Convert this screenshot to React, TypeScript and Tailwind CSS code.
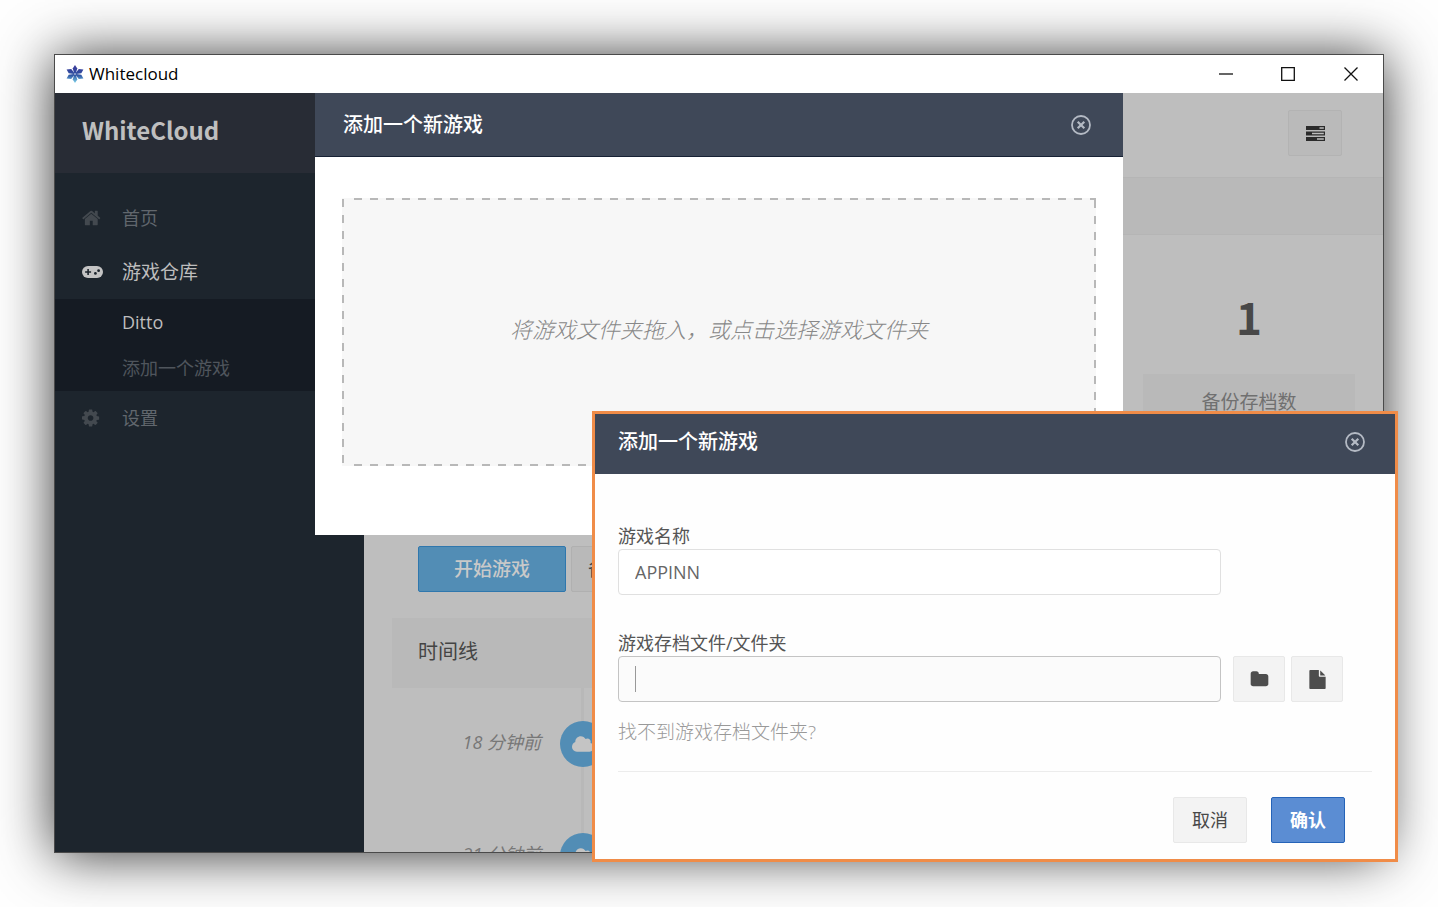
import type { ReactNode } from 'react'
import { FaCloud } from 'react-icons/fa'

function Snowflake() {
  return (
    <svg className="h-[18px] w-[18px] shrink-0" viewBox="0 0 18 18" aria-hidden="true">
      <defs>
        <linearGradient id="flake" x1="0" y1="0" x2="0" y2="18" gradientUnits="userSpaceOnUse">
          <stop offset="0.15" stopColor="#3a3f9c" />
          <stop offset="0.55" stopColor="#2b4fa0" />
          <stop offset="1" stopColor="#7fd6ec" />
        </linearGradient>
      </defs>
      <g fill="url(#flake)">
        <path d="M9 0 L11.3 3.6 L9.7 8.4 L8.3 8.4 L6.7 3.6Z" />
        <path d="M9 18 L11.3 14.4 L9.7 9.6 L8.3 9.6 L6.7 14.4Z" />
        <path d="M0.6 4.4 L5.2 3.9 L8.6 8.2 L7.8 9 L2.7 8.3Z" />
        <path d="M17.4 4.4 L12.8 3.9 L9.4 8.2 L10.2 9 L15.3 8.3Z" />
        <path d="M0.6 13.6 L5.2 14.1 L8.6 9.8 L7.8 9 L2.7 9.7Z" />
        <path d="M17.4 13.6 L12.8 14.1 L9.4 9.8 L10.2 9 L15.3 9.7Z" />
      </g>
    </svg>
  )
}

function HomeIcon() {
  return (
    <svg className="h-5 w-5" viewBox="64 0 1792 1792" fill="currentColor" aria-hidden="true">
      <path d="M1472 992v480q0 26-19 45t-45 19h-384v-384h-256v384h-384q-26 0-45-19t-19-45v-480q0-1 .5-3t.5-3l575-474 575 474q1 2 1 6zm223-69l-62 74q-8 9-21 11h-3q-13 0-21-7l-692-577-692 577q-12 8-24 7-13-2-21-11l-62-74q-8-10-7-23.5t11-21.5l719-599q32-26 76-26t76 26l244 204v-195q0-14 9-23t23-9h192q14 0 23 9t9 23v408l219 182q10 8 11 21.5t-7 23.5z" />
    </svg>
  )
}

function GamepadIcon() {
  return (
    <svg className="h-3 w-[21px]" viewBox="0 0 21 12" aria-hidden="true">
      <rect width="21" height="12" rx="6" fill="currentColor" />
      <path d="M5.3 3h1.6v2.2h2.2v1.6H6.9V9H5.3V6.8H3.1V5.2h2.2z" fill="#1d252d" />
      <circle cx="13.4" cy="7.4" r="1.4" fill="#1d252d" />
      <circle cx="16.6" cy="4.7" r="1.4" fill="#1d252d" />
    </svg>
  )
}

function CogIcon() {
  return (
    <svg className="h-5 w-5" viewBox="128 0 1792 1792" fill="currentColor" aria-hidden="true">
      <path d="M1152 896q0-106-75-181t-181-75-181 75-75 181 75 181 181 75 181-75 75-181zm512-109v222q0 12-8 23t-20 13l-185 28q-19 54-39 91 35 50 107 138 10 12 10 25t-9 23q-27 37-99 108t-94 71q-12 0-26-9l-138-108q-44 23-91 38-16 136-29 186-7 28-36 28h-222q-14 0-24.5-8.5t-11.5-21.5l-28-184q-49-16-90-37l-141 107q-10 9-25 9-14 0-25-11-126-114-165-168-7-10-7-23 0-12 8-23 15-21 51-66.5t54-70.5q-27-50-41-99l-183-27q-13-2-21-12.5t-8-23.5v-222q0-12 8-23t19-13l186-28q14-46 39-92-40-57-107-138-10-12-10-24 0-10 9-23 26-36 98.5-107.5t94.5-71.5q13 0 26 10l138 107q44-23 91-38 16-136 29-186 7-28 36-28h222q14 0 24.5 8.5t11.5 21.5l28 184q49 16 90 37l142-107q9-9 24-9 13 0 25 10 129 119 165 170 7 8 7 22 0 12-8 23-15 21-51 66.5t-54 70.5q26 50 41 98l183 28q13 2 21 12.5t8 23.5z" />
    </svg>
  )
}

function FolderIcon() {
  return (
    <svg className="h-[19px] w-[19px]" viewBox="0 0 1792 1792" fill="currentColor" aria-hidden="true">
      <path d="M1728 608v704q0 92-66 158t-158 66h-1216q-92 0-158-66t-66-158v-960q0-92 66-158t158-66h320q92 0 158 66t66 158v32h672q92 0 158 66t66 158z" />
    </svg>
  )
}

function FileIcon() {
  return (
    <svg className="h-[19px] w-[19px]" viewBox="0 0 1792 1792" fill="currentColor" aria-hidden="true">
      <path d="M1152 512v-472q22 14 36 28l408 408q14 14 28 36h-472zm-128 32q0 40 28 68t68 28h544v1056q0 40-28 68t-68 28h-1344q-40 0-68-28t-28-68v-1600q0-40 28-68t68-28h800v544z" />
    </svg>
  )
}

function TasksIcon() {
  return (
    <svg className="h-[15px] w-[19px]" viewBox="0 0 19 15" aria-hidden="true">
      <path fill="#2b2b2b" d="M0 0h19v4H0zM0 5.5h19v4H0zM0 11h19v4H0z" />
      <path fill="#bdbdbd" d="M13.5 1.2h4.3v1.6h-4.3zM6 6.7h11.8v1.6H6zM11 12.2h6.8v1.6H11z" />
    </svg>
  )
}

function CloseCircle() {
  return (
    <svg className="h-5 w-5" viewBox="0 0 20 20" fill="none" stroke="currentColor" aria-hidden="true">
      <circle cx="10" cy="10" r="9" strokeWidth="1.8" />
      <path strokeWidth="2.2" d="M6.7 6.7l6.6 6.6M13.3 6.7l-6.6 6.6" />
    </svg>
  )
}

function DashedFrame() {
  return (
    <svg className="absolute inset-0 h-full w-full" stroke="#b8b8b8" strokeWidth="2" strokeDasharray="8 8" aria-hidden="true">
      <line x1="12" y1="1" x2="100%" y2="1" />
      <line x1="12" y1="100%" x2="100%" y2="100%" strokeWidth="4" />
      <line x1="1" y1="1" x2="1" y2="100%" />
      <line x1="100%" y1="2" x2="100%" y2="100%" strokeWidth="4" />
    </svg>
  )
}

function TitleBar() {
  return (
    <header className="flex h-[38px] shrink-0 items-center justify-between bg-white pb-px pl-[11px] text-black">
      <div className="flex items-center gap-[5px]">
        <Snowflake />
        <span className="text-[17px] leading-6">Whitecloud</span>
      </div>
      <div className="flex h-full">
        <button className="flex w-[62px] items-center justify-center" aria-label="最小化">
          <svg className="h-[14px] w-[14px]" viewBox="0 0 14 14" stroke="#111" strokeWidth="1.3" aria-hidden="true">
            <path d="M0 7h14" />
          </svg>
        </button>
        <button className="flex w-[62px] items-center justify-center" aria-label="最大化">
          <svg className="h-[14px] w-[14px]" viewBox="0 0 14 14" fill="none" stroke="#111" strokeWidth="1.3" aria-hidden="true">
            <path d="M.7.7h12.6v12.6H.7z" />
          </svg>
        </button>
        <button className="flex w-16 items-center justify-center" aria-label="关闭">
          <svg className="h-[14px] w-[14px]" viewBox="0 0 14 14" stroke="#111" strokeWidth="1.3" aria-hidden="true">
            <path d="M.5.5l13 13M13.5.5l-13 13" />
          </svg>
        </button>
      </div>
    </header>
  )
}

function Sidebar() {
  return (
    <aside className="w-[309px] shrink-0 bg-[#1d252d] text-[18px] leading-6 text-[#61676d]">
      <div className="flex h-20 items-center bg-[#282c35] pb-[6px] pl-[27px] font-['Noto_Sans_CJK_SC',sans-serif] text-[24px] font-bold text-[#bfbfbf]">
        WhiteCloud
      </div>
      <nav className="pt-[18px]">
        <a href="#home" className="flex h-[54px] items-center pl-[27px]">
          <span className="w-10 text-[#43494f]">
            <HomeIcon />
          </span>
          首页
        </a>
        <a href="#games" className="flex h-[54px] items-center pl-[27px] text-[19px] text-[#bdbdbd]">
          <span className="w-10 text-[#c4c4c4]">
            <GamepadIcon />
          </span>
          游戏仓库
        </a>
        <div className="bg-[#151b23] pl-[67px]">
          <a href="#ditto" className="flex h-[46px] items-center text-[#bdbdbd]">
            Ditto
          </a>
          <a href="#add" className="flex h-[46px] items-center text-[#4f555c]">
            添加一个游戏
          </a>
        </div>
        <a href="#settings" className="flex h-[54px] items-center pl-[27px]">
          <span className="w-10 text-[#43494f]">
            <CogIcon />
          </span>
          设置
        </a>
      </nav>
    </aside>
  )
}

function TimelineItem({ time }: { time: string }) {
  return (
    <li className="flex h-28 items-center gap-[19px]">
      <span className="w-[149px] pb-1 text-right text-[18px] leading-6 text-[#777] italic">{time}</span>
      <span className="z-10 flex h-[46px] w-[46px] items-center justify-center rounded-full bg-[#528db5] text-[#c4c4c4]">
        <FaCloud className="h-[22px] w-[22px]" />
      </span>
    </li>
  )
}

function GamePage() {
  return (
    <main className="flex min-w-0 flex-1 flex-col bg-[#bebebe]">
      <div className="flex h-[84px] shrink-0 items-center justify-end pr-[41px] pb-1">
        <button
          className="flex h-[46px] w-[54px] items-center justify-center rounded-xs border border-[#b3b3b3] bg-[#bababa]"
          aria-label="任务"
        >
          <TasksIcon />
        </button>
      </div>
      <div className="h-[58px] shrink-0 border-y border-[#b5b5b5] bg-[#b9b9b9]" />

      <div className="flex h-[383px] shrink-0 items-end justify-between px-7 pb-[26px]">
        <div className="flex gap-[5px] pl-[26px]">
          <button className="h-[46px] w-[148px] rounded-xs border border-[#2f77ad] bg-[#528db5] text-[19px] font-medium text-[#c9c9c9]">
            开始游戏
          </button>
          <button className="h-[46px] w-[110px] rounded-xs border border-[#b0b0b0] bg-[#b9b9b9] pl-4 text-left text-[19px] text-[#444]">
            备份
          </button>
        </div>
        <div className="flex w-[212px] flex-col self-start pt-11 text-center">
          <strong className="font-['Noto_Sans_CJK_SC',sans-serif] text-[44px] leading-[74px] font-bold text-[#484848]">1</strong>
          <span className="mt-[21px] bg-[#b9b9b9] py-4 text-[19px] leading-6 text-[#707070]">备份存档数</span>
        </div>
      </div>

      <section className="ml-7 min-h-0 flex-1">
        <h2 className="flex h-[70px] items-center bg-[#b9b9b9] pb-[3px] pl-[26px] text-[20px] text-[#444]">时间线</h2>
        <div className="relative">
          <div className="absolute top-0 left-[189px] h-full w-[3px] bg-[#b8b8b8]" />
          <ul>
            <TimelineItem time="18 分钟前" />
            <TimelineItem time="21 分钟前" />
          </ul>
        </div>
      </section>
    </main>
  )
}

function DropDialog() {
  return (
    <section role="dialog" aria-labelledby="drop-title" className="w-[808px] bg-white">
      <header className="flex h-16 items-center justify-between border-b border-[#172235] bg-[#3f4858] pr-8 pl-7 text-white">
        <h2 id="drop-title" className="text-[20px] leading-6 font-medium">
          添加一个新游戏
        </h2>
        <button className="text-[#b4bac4]" aria-label="关闭">
          <CloseCircle />
        </button>
      </header>
      <div className="px-[27px] pt-[41px] pb-[69px]">
        <button className="relative flex h-[268px] w-full items-center justify-center bg-[#f7f7f7] pb-[5px] text-[22px] font-light text-[#888] italic">
          <DashedFrame />
          将游戏文件夹拖入，或点击选择游戏文件夹
        </button>
      </div>
    </section>
  )
}

function IconButton({ label, children }: { label: string; children: ReactNode }) {
  return (
    <button
      type="button"
      className="flex h-[46px] w-[52px] items-center justify-center rounded-xs border border-[#e8e8e8] bg-[#f3f3f3] text-[#4d4d4d]"
      aria-label={label}
    >
      {children}
    </button>
  )
}

function GameFormDialog() {
  return (
    <section
      role="dialog"
      aria-labelledby="form-title"
      className="absolute right-10 bottom-[45px] w-[806px] border-[3px] border-[#f08c48] bg-[#fefefe] text-[#555]"
    >
      <header className="flex h-[60px] items-center justify-between bg-[#3f4858] pr-[30px] pb-1 pl-[23px] text-white">
        <h2 id="form-title" className="text-[20px] leading-6 font-medium">
          添加一个新游戏
        </h2>
        <button className="text-[#b4bac4]" aria-label="关闭">
          <CloseCircle />
        </button>
      </header>
      <form className="px-[23px] pt-[50px] pb-4">
        <label htmlFor="game-name" className="block text-[18px] leading-[25px]">
          游戏名称
        </label>
        <input
          id="game-name"
          defaultValue="APPINN"
          className="block h-[46px] w-[603px] rounded-sm border border-[#e0e0e0] bg-white px-4 text-[18px] text-[#666]"
        />

        <label htmlFor="save-path" className="mt-9 block text-[18px] leading-[25px]">
          游戏存档文件/文件夹
        </label>
        <div className="flex items-center gap-[6px]">
          <div className="relative mr-[6px]">
            <input
              id="save-path"
              className="block h-[46px] w-[603px] rounded-sm border border-[#c4c4c4] bg-[#fbfbfb] px-4 text-[18px] text-[#666]"
            />
            <span className="absolute top-[10px] left-[17px] h-[26px] w-px bg-[#999]" />
          </div>
          <IconButton label="选择文件夹">
            <FolderIcon />
          </IconButton>
          <IconButton label="选择文件">
            <FileIcon />
          </IconButton>
        </div>
        <a href="#help" className="mt-[18px] block text-[19px] leading-6 font-light text-[#999]">
          找不到游戏存档文件夹?
        </a>

        <div className="mt-[27px] flex justify-end gap-6 border-t border-[#ececec] pt-[25px] pr-[27px]">
          <button
            type="button"
            className="h-[46px] w-[74px] rounded-xs border border-[#e8e8e8] bg-[#f3f3f3] text-[18px] text-[#484848]"
          >
            取消
          </button>
          <button
            type="button"
            className="h-[46px] w-[74px] rounded-xs border border-[#2563b8] bg-[#5b8dd3] text-[18px] font-bold text-white"
          >
            确认
          </button>
        </div>
      </form>
    </section>
  )
}

export default function App() {
  return (
    <div className="relative flex h-screen min-h-[720px] bg-[#fefefe] p-[54px] font-['Open_Sans','Noto_Sans_CJK_SC',sans-serif]">
      <div className="flex min-w-0 flex-1 flex-col border border-[#4a4a4a] shadow-[0_2px_52px_rgba(0,0,0,0.8)]">
        <TitleBar />
        <div className="relative flex min-h-0 flex-1 overflow-hidden">
          <Sidebar />
          <GamePage />
          <div className="absolute inset-0 z-20 flex items-start justify-center">
            <DropDialog />
          </div>
        </div>
      </div>
      <div className="absolute inset-0 z-30">
        <GameFormDialog />
      </div>
    </div>
  )
}
